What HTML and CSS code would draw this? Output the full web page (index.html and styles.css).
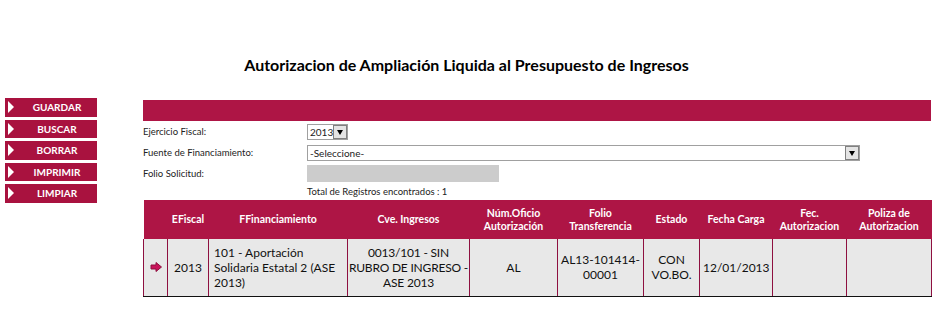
FILE: index.html
```html
<!DOCTYPE html>
<html>
<head>
    <meta charset="UTF-8">
    <title>Autorizacion de Ampliación Liquida</title>
    <link rel="stylesheet" href="styles.css">
</head>
<body>
    <h1 class="title">Autorizacion de Ampliación Liquida al Presupuesto de Ingresos</h1>
    <div class="page">
        <div class="menu">
            <a href="javascript:;" class="btn">GUARDAR</a>
            <a href="javascript:;" class="btn">BUSCAR</a>
            <a href="javascript:;" class="btn">BORRAR</a>
            <a href="javascript:;" class="btn">IMPRIMIR</a>
            <a href="javascript:;" class="btn">LIMPIAR</a>
        </div>
        <div class="main">
            <div class="bar"></div>
            <div class="form">
                <div class="row">
                    <label>Ejercicio Fiscal:</label>
                    <div class="select small"><span>2013</span><i></i></div>
                </div>
                <div class="row">
                    <label>Fuente de Financiamiento:</label>
                    <div class="select wide"><span>-Seleccione-</span><i></i></div>
                </div>
                <div class="row">
                    <label>Folio Solicitud:</label>
                    <div class="input"></div>
                </div>
                <div class="total">Total de Registros encontrados : 1</div>
            </div>
            <table class="grid">
                <tr>
                    <th class="c0"></th>
                    <th class="c1">EFiscal</th>
                    <th class="c2">FFinanciamiento</th>
                    <th class="c3">Cve. Ingresos</th>
                    <th class="c4">Núm.Oficio Autorización</th>
                    <th class="c5">Folio Transferencia</th>
                    <th class="c6">Estado</th>
                    <th class="c7">Fecha Carga</th>
                    <th class="c8">Fec. Autorizacion</th>
                    <th class="c9">Poliza de Autorizacion</th>
                </tr>
                <tr>
                    <td class="sel">
                        <svg width="12" height="10" viewBox="0 0 12 10"><path d="M1 3h5V0.5L11.5 5 6 9.5V7H1z" fill="#c8145a" stroke="#8e0f3e" stroke-width="1"/></svg>
                    </td>
                    <td>2013</td>
                    <td class="left">101 - Aportación Solidaria Estatal 2 (ASE 2013)</td>
                    <td class="tight">0013/101 - SIN RUBRO DE INGRESO - ASE 2013</td>
                    <td>AL</td>
                    <td>AL13-101414-00001</td>
                    <td>CON VO.BO.</td>
                    <td>12/01/2013</td>
                    <td></td>
                    <td></td>
                </tr>
            </table>
        </div>
    </div>
</body>
</html>
```

FILE: styles.css
```css
* {
    margin: 0;
    padding: 0;
    box-sizing: border-box;
}
body {
    font-family: Lato, "Open Sans", sans-serif;
    color: #000;
    background: #fff;
}
a {
    text-decoration: none;
}
.title {
    font-size: 16px;
    font-weight: bold;
    text-align: center;
    padding: 55px 0 0 0;
    height: 99px;
}
.page {
    display: flex;
}
.menu {
    width: 92px;
    margin-left: 5px;
    margin-top: -1px;
    display: flex;
    flex-direction: column;
    gap: 3px;
}
.btn {
    position: relative;
    display: block;
    height: 18.5px;
    line-height: 18px;
    background: #a9123f;
    color: #fff;
    font-size: 10px;
    font-weight: bold;
    text-align: center;
    padding-left: 12px;
}
.btn::before {
    content: "";
    position: absolute;
    left: 3px;
    top: 3px;
    border-left: 6px solid #fff;
    border-top: 6px solid transparent;
    border-bottom: 6px solid transparent;
}
.main {
    margin-left: 46px;
    width: 788px;
}
.bar {
    height: 21px;
    margin-top: 1px;
    background: #ae1545;
}
.form {
    font-size: 9.5px;
    color: #222;
}
.row {
    display: flex;
    align-items: center;
    height: 21px;
}
.row label {
    width: 164px;
}
.select {
    display: flex;
    align-items: center;
    height: 16px;
    border: 1px solid #a0a0a0;
    background: #fff;
    font-size: 10px;
}
.select span {
    flex: 1;
    padding-left: 2px;
}
.select i {
    width: 14px;
    height: 14px;
    border: 1px solid #808080;
    background: #e4e4e4;
    position: relative;
}
.select i::after {
    content: "";
    position: absolute;
    left: 3px;
    top: 4px;
    border-top: 5px solid #000;
    border-left: 3.5px solid transparent;
    border-right: 3.5px solid transparent;
}
.small {
    width: 41px;
}
.wide {
    width: 553px;
}
.input {
    width: 192px;
    height: 17px;
    background: #cccccc;
}
.total {
    padding-left: 164px;
    height: 16px;
    line-height: 16px;
    font-size: 9.5px;
}
.grid {
    border-collapse: collapse;
    width: 788px;
    table-layout: fixed;
}
.grid th {
    background: #ae1545;
    color: #fff;
    font-size: 10.5px;
    font-weight: bold;
    height: 39px;
    line-height: 13px;
    text-align: center;
    padding: 0 3px;
}
.grid td {
    background: #e8e8e8;
    border-left: 1px solid #8e1040;
    border-right: 1px solid #8e1040;
    border-bottom: 1px solid #111;
    font-size: 12px;
    line-height: 15px;
    height: 57px;
    text-align: center;
    padding: 0 3px;
    color: #111;
}
.grid td.left {
    text-align: left;
    padding-left: 5px;
}
.grid td.tight {
    padding: 0;
    letter-spacing: -0.2px;
}
.grid td.sel svg {
    display: block;
    margin: 0 auto;
}
.c0 { width: 24px; }
.c1 { width: 41px; }
.c2 { width: 139px; }
.c3 { width: 122px; }
.c4 { width: 88px; }
.c5 { width: 86px; }
.c6 { width: 56px; }
.c7 { width: 73px; }
.c8 { width: 74px; }
.c9 { width: 85px; }
```
